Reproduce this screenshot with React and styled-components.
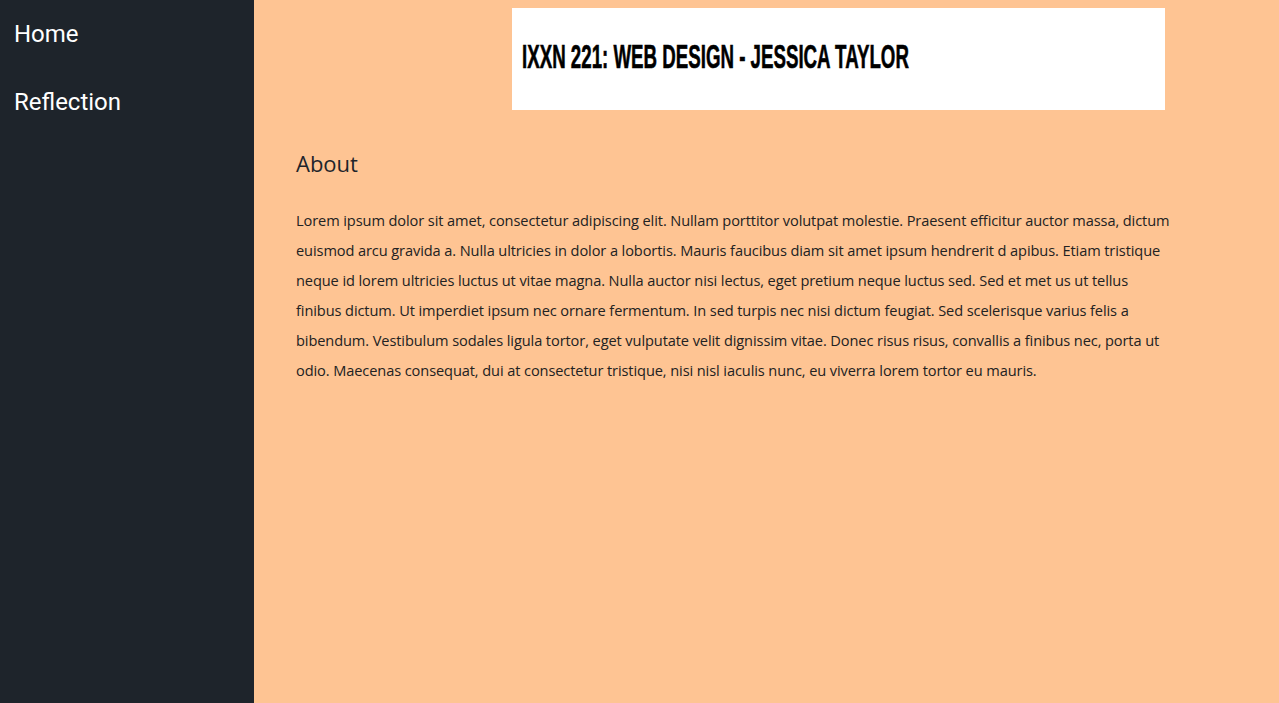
import React from 'react';
import styled, { createGlobalStyle } from 'styled-components';

const navItems = ['Home', 'Reflection'];

const aboutLines = [
  'Lorem ipsum dolor sit amet, consectetur adipiscing elit. Nullam porttitor volutpat molestie. Praesent efficitur auctor massa, dictum',
  'euismod arcu gravida a. Nulla ultricies in dolor a lobortis. Mauris faucibus diam sit amet ipsum hendrerit d apibus. Etiam tristique',
  'neque id lorem ultricies luctus ut vitae magna. Nulla auctor nisi lectus, eget pretium neque luctus sed. Sed et met us ut tellus',
  'finibus dictum. Ut imperdiet ipsum nec ornare fermentum. In sed turpis nec nisi dictum feugiat. Sed scelerisque varius felis a',
  'bibendum. Vestibulum sodales ligula tortor, eget vulputate velit dignissim vitae. Donec risus risus, convallis a finibus nec, porta ut',
  'odio. Maecenas consequat, dui at consectetur tristique, nisi nisl iaculis nunc, eu viverra lorem tortor eu mauris.',
];

const App = () => {
  return (
    <>
      <GlobalStyle />
      <Page>
        <Sidebar>
          <ul>
            {navItems.map((item, idx) => (
              <NavItem key={idx}>{item}</NavItem>
            ))}
          </ul>
        </Sidebar>
        <Main>
          <Header>
            <Title>IXXN 221: Web Design - Jessica Taylor</Title>
          </Header>
          <Content>
            <h2>About</h2>
            <p>
              {aboutLines.map((line, idx) => (
                <TextLine key={idx}>{line}</TextLine>
              ))}
            </p>
          </Content>
        </Main>
      </Page>
    </>
  );
};

export default App;

const GlobalStyle = createGlobalStyle`
  * {
    box-sizing: border-box;
  }
  body {
    margin: 0;
    background-color: #fec493;
  }
  ul {
    margin: 0;
    padding: 0;
    list-style: none;
  }
`;

const Page = styled.div`
  display: flex;
  min-height: 703px;
`;

const Sidebar = styled.nav`
  width: 254px;
  flex-shrink: 0;
  background-color: #1e242b;
  padding-top: 18px;
`;

const NavItem = styled.li`
  padding-left: 14px;
  height: 68px;
  font-family: Roboto, 'Liberation Sans', sans-serif;
  font-size: 24px;
  line-height: 32px;
  color: #ffffff;
`;

const Main = styled.main`
  flex: 1;
  padding-top: 8px;
`;

const Header = styled.header`
  width: 653px;
  height: 102px;
  margin-left: 258px;
  background-color: #ffffff;
  padding-left: 10px;
  display: flex;
  align-items: center;
  overflow: hidden;
`;

const Title = styled.h1`
  margin: 0 0 6px;
  display: inline-block;
  white-space: nowrap;
  font-family: 'Liberation Sans Narrow', 'Liberation Sans', sans-serif;
  font-weight: 700;
  font-size: 34px;
  text-transform: uppercase;
  color: #000000;
  -webkit-text-stroke: 0.6px #000000;
  transform: scaleX(0.55);
  transform-origin: left center;
`;

const Content = styled.section`
  padding: 38px 0 0 42px;
  color: #1e242b;
  font-family: 'Open Sans', 'Noto Sans', sans-serif;
  h2 {
    margin: 0 0 27px;
    font-size: 22px;
    font-weight: 400;
    line-height: 30px;
  }
  p {
    margin: 0;
    font-size: 14.6px;
    line-height: 30px;
    color: #222;
  }
`;

const TextLine = styled.span`
  display: block;
  white-space: nowrap;
  letter-spacing: -0.1px;
`;
